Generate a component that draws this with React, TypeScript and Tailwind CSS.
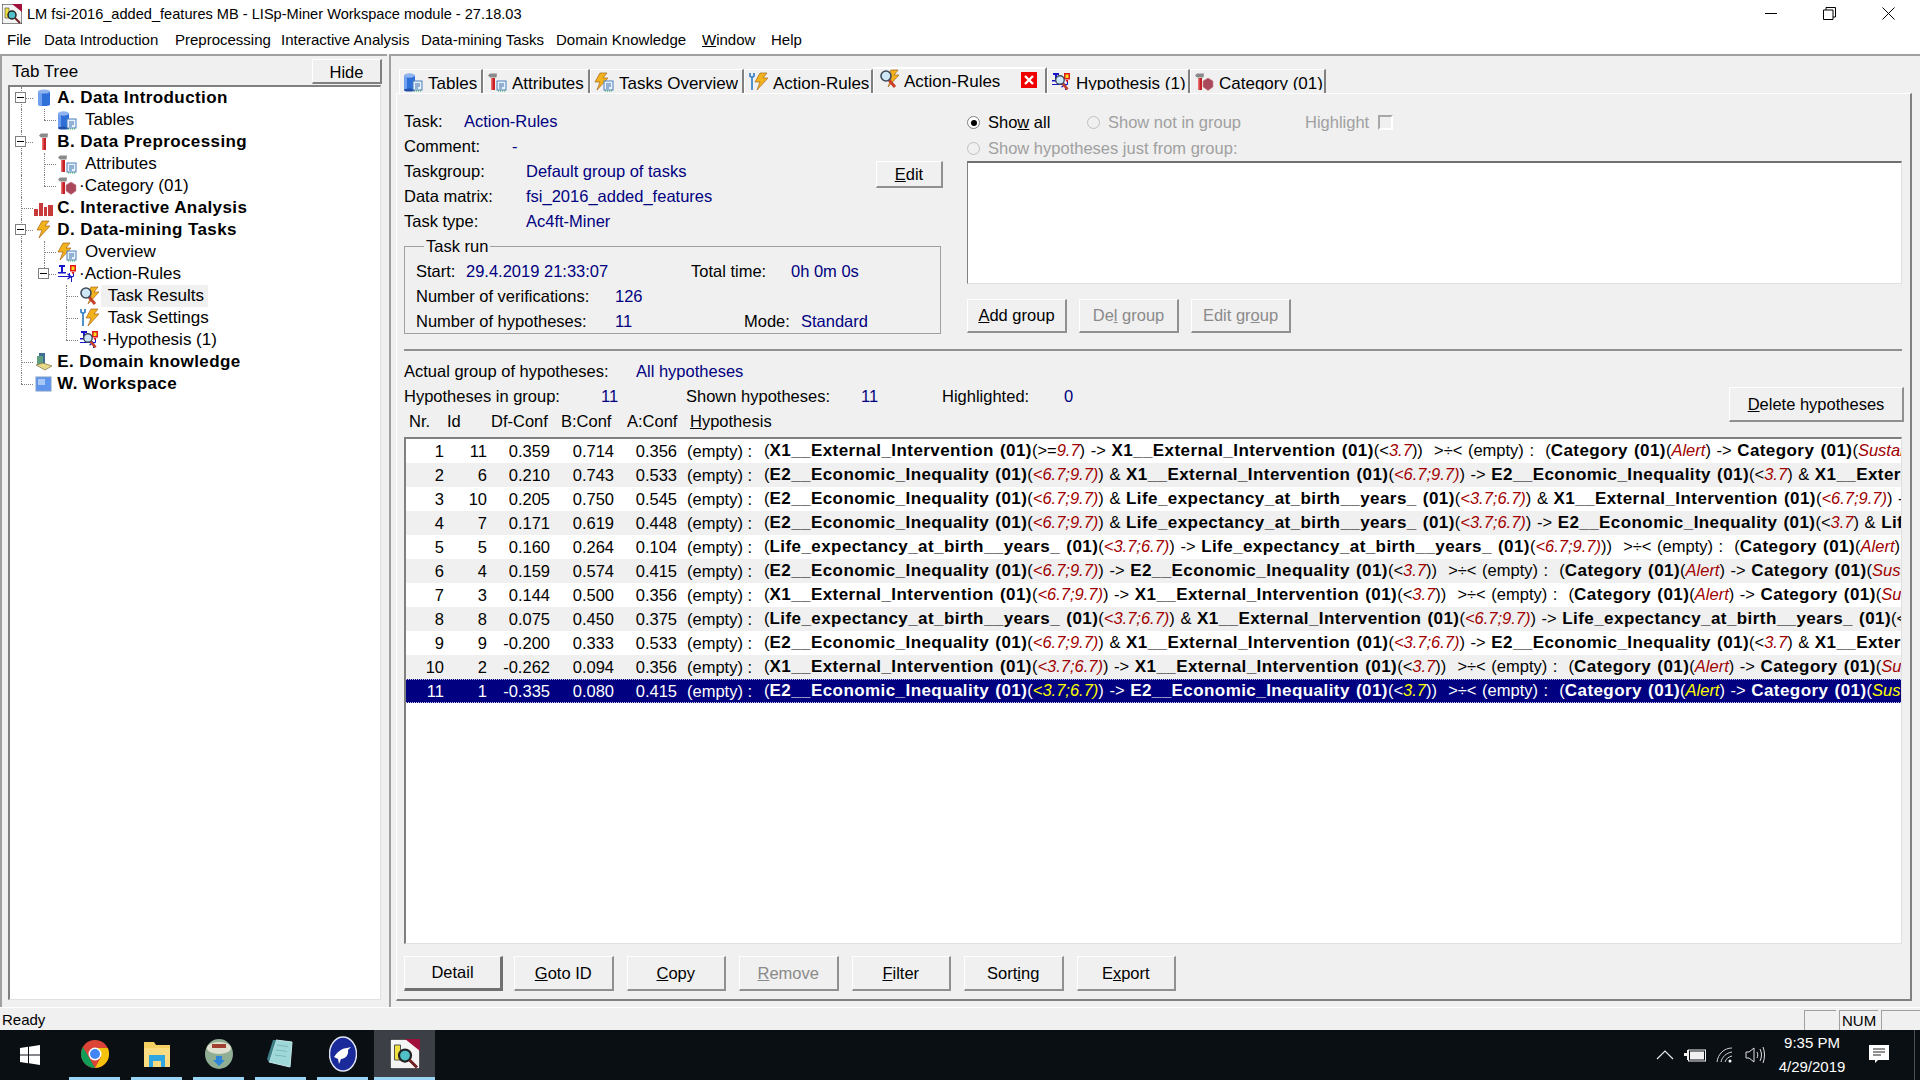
import type { ReactNode } from "react";

// ─── Small drawings (tree + tab icons) ────────────────────────────────────────

const Cyl = () => (
  <g>
    <rect x="1" y="3" width="11" height="15" fill="#2f6fd8" />
    <rect x="1" y="3" width="3" height="15" fill="#6f9fee" />
    <ellipse cx="6.500" cy="3.500" rx="5.500" ry="2.200" fill="#8fb4f0" />
    <ellipse cx="6.500" cy="18" rx="5.500" ry="1.600" fill="#1f4fa8" />
  </g>
);
const Doc = () => (
  <g>
    <rect x="10" y="9" width="9" height="9" fill="#e8f2ff" stroke="#4a7fb8" strokeWidth="1" />
    <path d="M12 12h5M12 14h5M12 16h3" stroke="#3a6fa8" strokeWidth="1" />
    <path d="M11 19h8" stroke="#2fa84f" strokeWidth="1.2" strokeDasharray="1 1" />
  </g>
);
const Hammer = () => (
  <g>
    <rect x="4" y="6" width="4" height="12" fill="#c42025" />
    <rect x="4" y="6" width="1.5" height="12" fill="#e87070" />
    <path d="M1 3.5 3 1.5h7l-.5 4H3z" fill="#8a8a8a" />
  </g>
);
const Gem = () => <path d="M14 6 19 9v6l-5 3.5L9 15V9z" fill="#a8485a" stroke="#c98a95" strokeWidth=".6" />;
const Bolt = ({ dx = 0 }: { dx?: number }) => (
  <path
    transform={`translate(${dx} 0)`}
    d="M8 1h7l-4 5h5L5 18l3-8H3z"
    fill="#f2b21c"
    stroke="#a8641a"
    strokeWidth=".7"
  />
);
const Lens = () => (
  <g>
    <path d="m10 11 6 7" stroke="#c8402a" strokeWidth="3" />
    <circle cx="7" cy="7" r="5" fill="#cfe6f7" stroke="#3c4a5a" strokeWidth="1.6" />
  </g>
);
const Flags = () => (
  <g fill="#1414c8">
    <path d="M2 1h6v2H6v5h3v1.5H1V8h3V3H2z" />
    <path d="M1 12h11l-2-2 1-.6 4 3.1-4 3.1-1-.6 2-2H1z" />
    <path d="M12 9h1v3h3V9h1v3.5l-2 1V18h-1v-4.500l-2-1z" />
    <rect x="13" y="1" width="6" height="6.500" fill="#e01818" />
    <rect x="14.500" y="2.500" width="3" height="3.500" fill="#f6e020" />
    <path d="M14.500 8h3l-1.500 2.500z" fill="#e01818" />
  </g>
);

function Icon({ name }: { name: string }) {
  const body: Record<string, ReactNode> = {
    cyl: (
      <g>
        <path d="M4 3.500h12v13c0 2-12 2-12 0z" fill="#2f6fd8" />
        <path d="M4 3.500h4v15l-4-2z" fill="#6f9fee" />
        <ellipse cx="10" cy="3.500" rx="6" ry="2" fill="#8fb4f0" />
      </g>
    ),
    tables: (<><Cyl /><Doc /></>),
    hammer: <g transform="translate(4 0)"><Hammer /></g>,
    attrs: (<><Hammer /><Doc /></>),
    cat: (<><Hammer /><Gem /></>),
    bars: <path d="M0 18V11h4v7zM5 18V5h4v13zM10 18v-9h3v9zM14 18V7h5v11z" fill="#c83a3a" />,
    bolt: <Bolt />,
    over: (<><Bolt dx={-2} /><Doc /></>),
    action: <Flags />,
    results: (<><Bolt dx={4} /><Lens /></>),
    settings: (
      <>
        <Bolt dx={4} />
        <path d="M2 1v3l2 1.500L6 4V1M4 6v12" stroke="#3f86c8" strokeWidth="1.800" fill="none" />
      </>
    ),
    hyp: (<><Flags /><g transform="translate(3 2) scale(.85)"><Lens /></g></>),
    domain: (
      <>
        <path d="M5 1h6v12H5z" fill="#3f6f94" />
        <path d="M3 4h6v9H3z" fill="#5f9f7f" />
        <path d="M2 13l7-2 9 3-7 4z" fill="#e8d88a" stroke="#7a7040" strokeWidth=".7" />
      </>
    ),
    work: (
      <>
        <rect x="2" y="3" width="15" height="14" fill="#5f95ee" stroke="#7f9fc8" />
        <rect x="4" y="5" width="7" height="6" fill="#a8c8f8" />
      </>
    ),
  };
  return (
    <svg width="20" height="20" viewBox="0 0 20 20" className="shrink-0">
      {body[name]}
    </svg>
  );
}

// ─── Tab tree ─────────────────────────────────────────────────────────────────

type TreeRow = {
  depth: number;
  label: string;
  icon: string;
  open?: boolean;
  dot?: boolean;
  selected?: boolean;
  pass: boolean[]; // ancestor lines that run through this row
  last?: boolean;
};

const TREE: TreeRow[] = [
  { depth: 0, label: "A. Data Introduction", icon: "cyl", open: true, pass: [] },
  { depth: 1, label: "Tables", icon: "tables", pass: [true], last: true },
  { depth: 0, label: "B. Data Preprocessing", icon: "hammer", open: true, pass: [] },
  { depth: 1, label: "Attributes", icon: "attrs", pass: [true] },
  { depth: 1, label: "Category (01)", icon: "cat", dot: true, pass: [true], last: true },
  { depth: 0, label: "C. Interactive Analysis", icon: "bars", pass: [] },
  { depth: 0, label: "D. Data-mining Tasks", icon: "bolt", open: true, pass: [] },
  { depth: 1, label: "Overview", icon: "over", pass: [true] },
  { depth: 1, label: "Action-Rules", icon: "action", open: true, dot: true, pass: [true], last: true },
  { depth: 2, label: "Task Results", icon: "results", selected: true, pass: [true, false] },
  { depth: 2, label: "Task Settings", icon: "settings", pass: [true, false] },
  { depth: 2, label: "Hypothesis (1)", icon: "hyp", dot: true, pass: [true, false], last: true },
  { depth: 0, label: "E. Domain knowledge", icon: "domain", pass: [] },
  { depth: 0, label: "W. Workspace", icon: "work", pass: [], last: true },
];

function TreeItem({ row }: { row: TreeRow }) {
  return (
    <div className="flex h-[22px] items-center">
      {row.pass.map((on, i) => (
        <span key={i} className="relative h-full w-[22.670px] shrink-0">
          {on && <span className="absolute left-[11px] top-0 h-full border-l border-dotted border-[#808080]" />}
        </span>
      ))}
      <span className="relative h-full w-[22.670px] shrink-0">
        <span
          className={`absolute left-[11px] top-0 border-l border-dotted border-[#808080] ${row.last ? "h-[11px]" : "h-full"}`}
        />
        <span className="absolute left-[11px] top-[11px] w-[12px] border-t border-dotted border-[#808080]" />
        {row.open && (
          <span className="absolute left-[5px] top-[5px] flex h-[11px] w-[11px] items-center justify-center border border-[#808080] bg-white">
            <span className="h-px w-[7px] bg-black" />
          </span>
        )}
      </span>
      <span className="flex w-[22.670px] shrink-0 justify-center">
        <Icon name={row.icon} />
      </span>
      <span
        className={`h-full leading-[22px] ${row.depth === 0 ? "pl-[2px] font-bold tracking-[0.4px]" : row.dot ? "pl-[1px]" : "pl-[7px] pr-[4px]"} ${row.selected ? "bg-[#f0f0f0]" : ""}`}
      >
        {row.dot ? "·" : ""}
        {row.label}
      </span>
    </div>
  );
}

function LeftPanel() {
  return (
    <div className="flex w-[388px] flex-col border-l-2 border-t-2 border-[#a0a0a0] pl-[6px] pr-[6px]">
      <div className="flex h-[29px] items-center justify-between">
        <span className="pl-[4px] pt-[2px] text-[17px]">Tab Tree</span>
        <button className="mr-[-1px] mt-[2px] h-[25px] w-[70px] border-b-2 border-l border-r-2 border-t border-b-[#808080] border-l-white border-r-[#808080] border-t-white">
          Hide
        </button>
      </div>
      <div className="h-[915px] border-l-2 border-r border-b border-t-2 border-l-[#808080] border-t-[#808080] border-r-[#e0e0e0] border-b-[#e0e0e0] bg-white text-[17px]">
        {TREE.map((r) => (
          <TreeItem key={r.label} row={r} />
        ))}
      </div>
    </div>
  );
}

// ─── Buttons & small controls ─────────────────────────────────────────────────

function Btn({
  w,
  h = "h-[35px]",
  disabled,
  strong,
  children,
}: {
  w: string;
  h?: string;
  disabled?: boolean;
  strong?: boolean;
  children: ReactNode;
}) {
  return (
    <button
      className={`shrink-0 border-l border-t border-l-white border-t-white ${w} ${h} ${
        strong ? "border-b-[3px] border-r-[3px] border-b-[#707070] border-r-[#707070]" : "border-b-2 border-r-2 border-b-[#909090] border-r-[#909090]"
      } ${disabled ? "text-[#8a8a8a]" : ""}`}
    >
      {children}
    </button>
  );
}

function Radio({ on, off }: { on?: boolean; off?: boolean }) {
  return (
    <span
      className={`mr-[8px] flex h-[13px] w-[13px] shrink-0 items-center justify-center rounded-full border ${
        off ? "border-[#c0c0c0]" : "border-[#808080] bg-white"
      }`}
    >
      {on && <span className="h-[6px] w-[6px] rounded-full bg-black" />}
    </span>
  );
}

function Label({ w, children }: { w?: string; children: ReactNode }) {
  return <span className={`shrink-0 ${w ?? ""}`}>{children}</span>;
}

function Val({ children }: { children: ReactNode }) {
  return <span className="text-[#000080]">{children}</span>;
}

// ─── Tabs ─────────────────────────────────────────────────────────────────────

const TABS = [
  { label: "Tables", icon: "tables", w: "w-[84px]" },
  { label: "Attributes", icon: "attrs", w: "w-[107px]" },
  { label: "Tasks Overview", icon: "over", w: "w-[154px]" },
  { label: "Action-Rules", icon: "settings", w: "w-[129px]" },
  { label: "Action-Rules", icon: "results", w: "w-[174px]", active: true },
  { label: "Hypothesis (1)", icon: "hyp", w: "w-[143px]" },
  { label: "Category (01)", icon: "cat", w: "w-[136px]" },
];

function TabStrip() {
  return (
    <div className="flex h-[37px] items-end pl-[8px] text-[17px]">
      {TABS.map((t, i) =>
        t.active ? (
          <div
            key={i}
            className={`flex h-[26px] items-start border-l border-r-2 border-t-2 border-l-white border-r-[#808080] border-t-white pl-[5px] ${t.w}`}
          >
            <Icon name={t.icon} />
            <span className="ml-[5px] leading-[25px]">{t.label}</span>
            <span className="ml-auto mr-[8px] mt-[3px] flex h-[16px] w-[16px] items-center justify-center bg-[#f00000]">
              <svg width="12" height="12" viewBox="0 0 12 12">
                <path d="M2 2l8 8M10 2l-8 8" stroke="#fff" strokeWidth="2.400" />
              </svg>
            </span>
          </div>
        ) : (
          <div
            key={i}
            className={`flex h-[24px] items-center overflow-hidden border-l border-r-2 border-t border-l-white border-r-[#808080] border-t-white pl-[3px] ${t.w}`}
          >
            <Icon name={t.icon} />
            <span className="ml-[5px] h-[20px] self-start overflow-hidden leading-[28px]">{t.label}</span>
          </div>
        ),
      )}
    </div>
  );
}

// ─── Hypotheses table ─────────────────────────────────────────────────────────

const E2 = "*E2__Economic_Inequality (01)*";
const X1 = "*X1__External_Intervention (01)*";
const LI = "*Life_expectancy_at_birth__years_ (01)*";
const A = "{<6.7;9.7)}";
const B = "{<3.7;6.7)}";
const LOW = "<{3.7}";
const tail = (s: string) => `  >÷< (empty) :  (*Category (01)*({Alert}) -> *Category (01)*({${s}}))`;

const ROWS = [
  { nr: 1, id: 11, df: "0.359", b: "0.714", a: "0.356", h: `(${X1}(>={9.7}) -> ${X1}(${LOW}))${tail("Sustainable")}` },
  { nr: 2, id: 6, df: "0.210", b: "0.743", a: "0.533", h: `(${E2}(${A}) & ${X1}(${A}) -> ${E2}(${LOW}) & ${X1}(${LOW}))` },
  { nr: 3, id: 10, df: "0.205", b: "0.750", a: "0.545", h: `(${E2}(${A}) & ${LI}(${B}) & ${X1}(${A}) -> ${E2}(${LOW}))` },
  { nr: 4, id: 7, df: "0.171", b: "0.619", a: "0.448", h: `(${E2}(${A}) & ${LI}(${B}) -> ${E2}(${LOW}) & ${LI}(${LOW}))` },
  { nr: 5, id: 5, df: "0.160", b: "0.264", a: "0.104", h: `(${LI}(${B}) -> ${LI}(${A}))${tail("Sustainable")}` },
  { nr: 6, id: 4, df: "0.159", b: "0.574", a: "0.415", h: `(${E2}(${A}) -> ${E2}(${LOW}))${tail("Sustainable")}` },
  { nr: 7, id: 3, df: "0.144", b: "0.500", a: "0.356", h: `(${X1}(${A}) -> ${X1}(${LOW}))${tail("Sustainable")}` },
  { nr: 8, id: 8, df: "0.075", b: "0.450", a: "0.375", h: `(${LI}(${B}) & ${X1}(${A}) -> ${LI}(${LOW}))` },
  { nr: 9, id: 9, df: "-0.200", b: "0.333", a: "0.533", h: `(${E2}(${A}) & ${X1}(${B}) -> ${E2}(${LOW}) & ${X1}(${LOW}))` },
  { nr: 10, id: 2, df: "-0.262", b: "0.094", a: "0.356", h: `(${X1}(${B}) -> ${X1}(${LOW}))${tail("Sustainable")}` },
  { nr: 11, id: 1, df: "-0.335", b: "0.080", a: "0.415", h: `(${E2}(${B}) -> ${E2}(${LOW}))${tail("Sustainable")}` },
];

// *bold* and {value} markers inside the hypothesis strings
function Hypothesis({ text, selected }: { text: string; selected: boolean }) {
  const parts = text.split(/(\*[^*]+\*|\{[^}]+\})/).filter(Boolean);
  return (
    <span className="whitespace-pre [word-spacing:1px]">
      {parts.map((p, i) => {
        if (p[0] === "*")
          return (
            <b key={i} className="text-[17px] tracking-[0.43px]">
              {p.slice(1, -1)}
            </b>
          );
        if (p[0] === "{")
          return (
            <i key={i} className={`text-[16.5px] ${selected ? "text-[#ffff00]" : "text-[#a00000]"}`}>
              {p.slice(1, -1)}
            </i>
          );
        return <span key={i}>{p}</span>;
      })}
    </span>
  );
}

function HypothesisTable() {
  return (
    <div className="mt-[3px] h-[507px] w-[1498px] overflow-hidden border-l-2 border-t-2 border-b border-r border-l-[#808080] border-t-[#808080] border-b-[#e0e0e0] border-r-[#e0e0e0] bg-white">
      {ROWS.map((r) => {
        const sel = r.nr === 11;
        return (
          <div
            key={r.nr}
            className={`flex h-[24px] items-center overflow-hidden whitespace-nowrap ${
              sel ? "border-y border-dotted border-[#c0c0ff] bg-[#000080] text-white" : r.nr % 2 === 0 ? "bg-[#f0f0f0]" : "bg-white"
            }`}
          >
            <span className="w-[38px] shrink-0 text-right">{r.nr}</span>
            <span className="w-[43px] shrink-0 text-right">{r.id}</span>
            <span className="w-[63px] shrink-0 text-right">{r.df}</span>
            <span className="w-[64px] shrink-0 text-right">{r.b}</span>
            <span className="w-[63px] shrink-0 text-right">{r.a}</span>
            <span className="ml-[10px] w-[77px] shrink-0">(empty) :</span>
            <Hypothesis text={r.h} selected={sel} />
          </div>
        );
      })}
    </div>
  );
}

// ─── Task results page ────────────────────────────────────────────────────────

function Row({ children }: { children: ReactNode }) {
  return <div className="flex h-[25px] items-center">{children}</div>;
}

function TaskResults() {
  return (
    <div className="mr-[8px] ml-[5px] flex h-[908px] flex-col border-b-2 border-r-2 border-t border-l border-b-[#808080] border-r-[#808080] border-t-white border-l-white pl-[7px] pr-[8px]">
      <div className="flex h-[255px] pt-[15px]">
        <div className="w-[537px] shrink-0">
          <div className="flex">
            <div className="grow">
              <Row><Label w="w-[60px]">Task:</Label><Val>Action-Rules</Val></Row>
              <Row><Label w="w-[108px]">Comment:</Label><Val>-</Val></Row>
              <Row><Label w="w-[122px]">Taskgroup:</Label><Val>Default group of tasks</Val></Row>
              <Row><Label w="w-[122px]">Data matrix:</Label><Val>fsi_2016_added_features</Val></Row>
              <Row><Label w="w-[122px]">Task type:</Label><Val>Ac4ft-Miner</Val></Row>
            </div>
            <div className="-mr-[2px] mt-[52px]">
              <Btn w="w-[67px]" h="h-[27px]"><u>E</u>dit</Btn>
            </div>
          </div>
          <fieldset className="h-[100px] border border-[#a0a0a0] px-[11px]">
            <legend className="ml-[8px] px-[2px] leading-[25px]">Task run</legend>
            <Row>
              <Label w="w-[50px]">Start:</Label>
              <Label w="w-[225px]"><Val>29.4.2019 21:33:07</Val></Label>
              <Label w="w-[100px]">Total time:</Label>
              <Val>0h 0m 0s</Val>
            </Row>
            <Row><Label w="w-[199px]">Number of verifications:</Label><Val>126</Val></Row>
            <Row>
              <Label w="w-[199px]">Number of hypotheses:</Label>
              <Label w="w-[129px]"><Val>11</Val></Label>
              <Label w="w-[57px]">Mode:</Label>
              <Val>Standard</Val>
            </Row>
          </fieldset>
        </div>
        <div className="ml-[26px] w-[935px] pt-[1px]">
          <Row>
            <Radio on />
            <span className="w-[99px]">Sho<u>w</u> all</span>
            <span className="flex w-[218px] items-center text-[#a0a0a0]"><Radio off />Show not in group</span>
            <span className="flex items-center text-[#a0a0a0]">
              Highlight
              <span className="ml-[9px] h-[15px] w-[15px] border-2 border-[#a8a8a8] border-b-white border-r-white bg-[#f0f0f0]" />
            </span>
          </Row>
          <div className="pt-[1px]">
            <Row><span className="flex items-center text-[#a0a0a0]"><Radio off />Show hypotheses just from group:</span></Row>
          </div>
          <div className="h-[123px] border-l border-t-2 border-b border-r border-l-[#808080] border-t-[#707070] border-b-[#e0e0e0] border-r-[#e0e0e0] bg-white" />
          <div className="mt-[15px] flex gap-[12px]">
            <Btn w="w-[100px]" h="h-[34px]"><u>A</u>dd group</Btn>
            <Btn w="w-[100px]" h="h-[34px]" disabled>De<u>l</u> group</Btn>
            <Btn w="w-[100px]" h="h-[34px]" disabled>Edit gr<u>o</u>up</Btn>
          </div>
        </div>
      </div>
      <div className="h-[2px] border-t-2 border-[#909090]" />
      <div className="flex pt-[8px]">
        <div>
          <Row><Label w="w-[232px]">Actual group of hypotheses:</Label><Val>All hypotheses</Val></Row>
          <Row>
            <Label w="w-[197px]">Hypotheses in group:</Label>
            <Label w="w-[85px]"><Val>11</Val></Label>
            <Label w="w-[175px]">Shown hypotheses:</Label>
            <Label w="w-[81px]"><Val>11</Val></Label>
            <Label w="w-[122px]">Highlighted:</Label>
            <Val>0</Val>
          </Row>
          <Row>
            <Label w="w-[43px]"><span className="pl-[5px]">Nr.</span></Label>
            <Label w="w-[44px]">Id</Label>
            <Label w="w-[70px]">Df-Conf</Label>
            <Label w="w-[66px]">B:Conf</Label>
            <Label w="w-[63px]">A:Conf</Label>
            <Label><u>H</u>ypothesis</Label>
          </Row>
        </div>
        <div className="ml-auto -mr-[2px] mt-[28px]">
          <Btn w="w-[175px]" h="h-[35px]"><u>D</u>elete hypotheses</Btn>
        </div>
      </div>
      <HypothesisTable />
      <div className="mt-[12px] flex gap-[13px]">
        <Btn w="w-[99px] -mr-[2px]" strong>Detail</Btn>
        <Btn w="w-[99.500px]"><u>G</u>oto ID</Btn>
        <Btn w="w-[99.500px]"><u>C</u>opy</Btn>
        <Btn w="w-[99.500px]" disabled><u>R</u>emove</Btn>
        <Btn w="w-[99.500px]"><u>F</u>ilter</Btn>
        <Btn w="w-[99.500px]">Sort<u>i</u>ng</Btn>
        <Btn w="w-[99.500px]">E<u>x</u>port</Btn>
      </div>
    </div>
  );
}

// ─── Taskbar ──────────────────────────────────────────────────────────────────

const AppLogo = ({ size }: { size: number }) => (
  <svg width={size} height={size} viewBox="0 0 20 20" className="shrink-0">
    <rect width="20" height="20" fill="#f4f4f4" stroke="#222" strokeWidth="1" />
    <path d="M10 0h10v8z" fill="#a0103a" />
    <path d="M3 4h4v10H3z" fill="#f0e040" stroke="#444" strokeWidth=".6" />
    <circle cx="10" cy="11" r="4" fill="#50c0c8" stroke="#222" strokeWidth="1.500" />
    <path d="m13 14 5 5" stroke="#702020" strokeWidth="2" />
  </svg>
);

function TaskIcon({ w, active, children }: { w: string; active?: boolean; children: ReactNode }) {
  return (
    <div className={`flex h-full flex-col ${w} ${active ? "bg-[#3c4046]" : ""}`}>
      <div className="flex grow items-center justify-center">{children}</div>
      <div className="h-[3px] bg-[#9ad4f4]" />
    </div>
  );
}

function Taskbar() {
  return (
    <div className="flex h-[50px] items-stretch bg-[#0a0f14] text-white">
      <div className="flex w-[60px] items-center justify-center">
        <svg width="20" height="20" viewBox="0 0 20 20" fill="#fff">
          <path d="M0 3l8-1.200V9.500H0zM9 1.700 20 0v9.500H9zM0 10.500h8v7.700L0 17zM9 10.500h11V20L9 18.300z" />
        </svg>
      </div>
      <div className="ml-[9px] flex gap-[11px]">
        <TaskIcon w="w-[51px]">
          <svg width="28" height="28" viewBox="0 0 28 28">
            <circle cx="14" cy="14" r="14" fill="#db4437" />
            <path d="M14 28A14 14 0 0 1 1.900 7L8 17.500z" fill="#0f9d58" />
            <path d="M14 28 20 17 14 8h12.700A14 14 0 0 1 14 28z" fill="#f4c20d" />
            <circle cx="14" cy="14" r="6.500" fill="#fff" />
            <circle cx="14" cy="14" r="5" fill="#4285f4" />
          </svg>
        </TaskIcon>
        <TaskIcon w="w-[51px]">
          <svg width="28" height="28" viewBox="0 0 28 28">
            <path d="M1 2h10l2 3h14v22H1z" fill="#f6cf63" />
            <rect x="1" y="8" width="26" height="19" fill="#fbdc80" />
            <path d="M6 15h16v12H6z" fill="#2fa6e0" />
            <path d="M10 21h8v6h-8z" fill="#fbdc80" />
          </svg>
        </TaskIcon>
        <TaskIcon w="w-[51px]">
          <svg width="30" height="30" viewBox="0 0 30 30">
            <ellipse cx="15" cy="15" rx="14" ry="15" fill="#8fae94" />
            <ellipse cx="15" cy="9" rx="12" ry="6" fill="#e0e0d0" />
            <rect x="8" y="5" width="14" height="4" fill="#a04030" />
            <path d="M12 17h6v4h3l-6 6-6-6h3z" fill="#2f86d8" />
          </svg>
        </TaskIcon>
        <TaskIcon w="w-[51px]">
          <svg width="28" height="30" viewBox="0 0 28 30">
            <path d="M9 1 25 3 23 28 2 23z" fill="#9fd8d8" stroke="#c8e8e8" />
            <path d="M2 23 9 1l-3 0L0 20z" fill="#3f7f86" />
            <path d="M10 6l11 1.500M9 11l11 1.500M8 16l11 1.500" stroke="#7fb8b8" />
          </svg>
        </TaskIcon>
        <TaskIcon w="w-[51px]">
          <svg width="28" height="36" viewBox="0 0 28 36">
            <ellipse cx="14" cy="18" rx="13.500" ry="17" fill="#1a2a9a" stroke="#dfe4f4" strokeWidth="1.500" />
            <path d="M5 21c4-6 9-9 13-9l4-1-3 3c1 5-3 9-7 9l-2 5-1-5z" fill="#fff" />
          </svg>
        </TaskIcon>
      </div>
      <div className="ml-[6px]">
        <TaskIcon w="w-[61px]" active>
          <AppLogo size={30} />
        </TaskIcon>
      </div>
      <div className="ml-auto flex items-center">
        <svg width="18" height="10" viewBox="0 0 18 10" className="mr-[10px]" fill="none" stroke="#e8e8e8" strokeWidth="1.200">
          <path d="M1 9l8-8 8 8" />
        </svg>
        <svg width="22" height="14" viewBox="0 0 22 14" className="mr-[10px]">
          <rect x="4.500" y="2" width="17" height="11" fill="none" stroke="#f0f0f0" />
          <rect x="6" y="3.500" width="14" height="8" fill="#f0f0f0" />
          <path d="M0 5h3V2h1v10H3V8H0z" fill="#f0f0f0" />
        </svg>
        <svg width="18" height="16" viewBox="0 0 18 16" className="mr-[11px]" fill="none" stroke="#d0d0d0" strokeWidth="1">
          <path d="M1 15C2 7 8 1 16 1M5 15c1-5 5-9 11-10M9 15c1-3 3-5 7-6" />
          <circle cx="14" cy="14" r="1.500" fill="#fff" stroke="none" />
        </svg>
        <svg width="20" height="18" viewBox="0 0 20 18" className="mr-[9px]" fill="none" stroke="#e0e0e0" strokeWidth="1">
          <path d="M1 6h3l5-4v14l-5-4H1zM12 6c1 2 1 4 0 6M15 3c2 4 2 8 0 12M18 1c2 5 2 11 0 16" />
        </svg>
        <div className="w-[76px] text-center text-[15px] leading-[24px]">
          <div>9:35 PM</div>
          <div>4/29/2019</div>
        </div>
        <svg width="20" height="20" viewBox="0 0 20 20" className="ml-[19px] mr-[25px]">
          <path d="M0 0h20v15H9l-3 3v-3H0z" fill="#fff" />
          <path d="M4 4h12M4 7h12M4 10h8" stroke="#222" />
        </svg>
        <div className="mr-[5px] h-full w-px bg-[#4a4e52]" />
      </div>
    </div>
  );
}

// ─── App ──────────────────────────────────────────────────────────────────────

const MENU = [
  { label: "File", w: "w-[37px]" },
  { label: "Data Introduction", w: "w-[131px]" },
  { label: "Preprocessing", w: "w-[106px]" },
  { label: "Interactive Analysis", w: "w-[140px]" },
  { label: "Data-mining Tasks", w: "w-[135px]" },
  { label: "Domain Knowledge", w: "w-[146px]" },
];

export default function App() {
  return (
    <div className="flex h-[1080px] w-[1920px] flex-col overflow-hidden bg-[#f0f0f0] font-['Liberation_Sans',sans-serif] text-[16.5px] text-black">
      {/* title bar */}
      <div className="flex h-[27px] items-center bg-white pl-[2px]">
        <AppLogo size={20} />
        <span className="ml-[5px] pt-[2px] text-[14.6px]">LM fsi-2016_added_features MB - LISp-Miner Workspace module - 27.18.03</span>
        <div className="ml-auto flex items-center gap-[46px] pr-[25px]">
          <span className="h-px w-[12px] bg-black" />
          <svg width="13" height="13" viewBox="0 0 13 13" fill="none" stroke="#000">
            <path d="M.5 3h9.500v9.500H.5zM3 3V.5h9.500V10H10" />
          </svg>
          <svg width="13" height="13" viewBox="0 0 13 13" stroke="#000">
            <path d="M.5.5l12 12M12.500.5l-12 12" />
          </svg>
        </div>
      </div>
      {/* menu */}
      <div className="flex h-[27px] items-center bg-white pl-[7px] text-[15px]">
        {MENU.map((m) => (
          <span key={m.label} className={m.w}>
            {m.label}
          </span>
        ))}
        <span className="w-[69px]"><u>W</u>indow</span>
        <span>Help</span>
      </div>
      {/* main */}
      <div className="flex h-[954px] border-b border-white">
        <LeftPanel />
        <div className="ml-[2px] grow border-l-2 border-t-2 border-[#a0a0a0]">
          <TabStrip />
          <TaskResults />
        </div>
      </div>
      {/* status */}
      <div className="flex h-[22px] items-end">
        <span className="pl-[2px] text-[15px] leading-[20px]">Ready</span>
        <div className="ml-auto flex gap-[3px]">
          <span className="h-[20px] w-[32px] border-l border-t border-[#a0a0a0]" />
          <span className="h-[20px] w-[39px] border-l border-t border-[#a0a0a0] pl-[2px] text-[15px] leading-[19px]">NUM</span>
          <span className="h-[20px] w-[39px] border-l border-t border-[#a0a0a0]" />
        </div>
      </div>
      <Taskbar />
    </div>
  );
}
